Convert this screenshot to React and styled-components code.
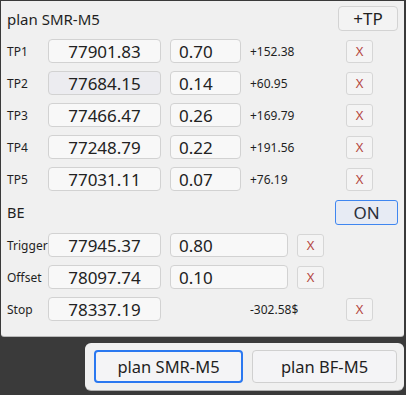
import React from "react";
import styled, { createGlobalStyle } from "styled-components";

const Global = createGlobalStyle`
  html, body { margin: 0; padding: 0; background: #3a3a3a; }
  body { font-family: "Noto Sans", "Open Sans", sans-serif; color: #1f1f1f; }
  * { box-sizing: border-box; }
`;

const Page = styled.div`
  width: 406px;
  height: 395px;
  padding: 1px 2px 0 1px;
  display: flex;
  flex-direction: column;
  gap: 7px;
`;

const Panel = styled.div`
  width: 403px;
  height: 335px;
  background: #f0f0f0;
  border-radius: 0 0 3px 3px;
  box-shadow: 0 1px 0 #b9b9b9;
  padding: 5px 6px 0 5px;
  display: flex;
  flex-direction: column;
  gap: 8px;
`;

const TitleRow = styled.div`
  height: 25px;
  display: flex;
  align-items: center;
  justify-content: space-between;
`;

const Title = styled.div`
  font-size: 15px;
  padding-left: 1px;
`;

const PlainButton = styled.div`
  width: ${(p) => p.$w}px;
  height: ${(p) => p.$h}px;
  display: flex;
  align-items: center;
  justify-content: center;
  font-size: ${(p) => p.$fs || 17}px;
  background: #f3f3f3;
  border: 1px solid #d3d3d3;
  border-radius: 4px;
  color: #1f1f1f;
`;

const Row = styled.div`
  height: ${(p) => p.$h || 24}px;
  display: flex;
  align-items: center;
`;

const Label = styled.div`
  width: 42px;
  padding-left: 1px;
  font-size: ${(p) => p.$fs || 12}px;
  flex-shrink: 0;
`;

const Field = styled.div`
  width: ${(p) => p.$w}px;
  height: 24px;
  flex-shrink: 0;
  display: flex;
  align-items: center;
  justify-content: ${(p) => (p.$center ? "center" : "flex-start")};
  padding-left: ${(p) => (p.$center ? 0 : 8)}px;
  margin-right: 9px;
  font-size: 17px;
  background: ${(p) => (p.$hover ? "#ececf0" : "#f8f8f8")};
  border: 1px solid #d2d2d2;
  border-radius: 4px;
  color: #222;
`;

const Spacer = styled.div`
  width: ${(p) => p.$w}px;
  flex-shrink: 0;
`;

const Diff = styled.div`
  width: 96px;
  font-size: 12px;
  flex-shrink: 0;
  color: #1f1f1f;
`;

const XButton = styled.div`
  width: 27px;
  height: 23px;
  flex-shrink: 0;
  display: flex;
  align-items: center;
  justify-content: center;
  font-size: 13px;
  color: #b4463f;
  background: #f4f4f4;
  border: 1px solid #d6d6d6;
  border-radius: 3px;
`;

const OnButton = styled.div`
  width: 63px;
  height: 25px;
  margin-left: auto;
  display: flex;
  align-items: center;
  justify-content: center;
  font-size: 17px;
  color: #2a2f3a;
  background: #e7ebf4;
  border: 1px solid #3f86f0;
  border-radius: 3px;
`;

const TabBar = styled.div`
  align-self: flex-end;
  width: 319px;
  height: 47px;
  background: #f0f0f0;
  border-radius: 6px;
  box-shadow: 0 1px 0 #b0b0b0;
  padding: 7px 7px 7px 9px;
  display: flex;
  gap: 9px;
`;

const Tab = styled.div`
  width: ${(p) => p.$w}px;
  height: 33px;
  display: flex;
  align-items: center;
  justify-content: center;
  font-size: 16.5px;
  color: #1f1f1f;
  background: #f4f4f6;
  border: ${(p) => (p.$active ? "2px solid #2a78f0" : "1px solid #d0d0d0")};
  border-radius: 4px;
`;

const tps = [
  ["TP1", "77901.83", "0.70", "+152.38"],
  ["TP2", "77684.15", "0.14", "+60.95"],
  ["TP3", "77466.47", "0.26", "+169.79"],
  ["TP4", "77248.79", "0.22", "+191.56"],
  ["TP5", "77031.11", "0.07", "+76.19"],
];

export default function App() {
  return (
    <>
      <Global />
      <Page>
        <Panel>
          <TitleRow>
            <Title>plan SMR-M5</Title>
            <PlainButton $w={60} $h={25} $fs={17}>+TP</PlainButton>
          </TitleRow>
          {tps.map(([l, a, b, d], i) => (
            <Row key={l}>
              <Label>{l}</Label>
              <Field $w={113} $center $hover={i === 1}>{a}</Field>
              <Field $w={71}>{b}</Field>
              <Diff>{d}</Diff>
              <XButton>X</XButton>
            </Row>
          ))}
          <Row $h={26}>
            <Label $fs={14.5}>BE</Label>
            <OnButton>ON</OnButton>
          </Row>
          <Row>
            <Label>Trigger</Label>
            <Field $w={113} $center>77945.37</Field>
            <Field $w={118}>0.80</Field>
            <XButton>X</XButton>
          </Row>
          <Row>
            <Label>Offset</Label>
            <Field $w={113} $center>78097.74</Field>
            <Field $w={118}>0.10</Field>
            <XButton>X</XButton>
          </Row>
          <Row>
            <Label>Stop</Label>
            <Field $w={113} $center>78337.19</Field>
            <Spacer $w={80} />
            <Diff>-302.58$</Diff>
            <XButton>X</XButton>
          </Row>
        </Panel>
        <TabBar>
          <Tab $w={149} $active>plan SMR-M5</Tab>
          <Tab $w={145}>plan BF-M5</Tab>
        </TabBar>
      </Page>
    </>
  );
}
